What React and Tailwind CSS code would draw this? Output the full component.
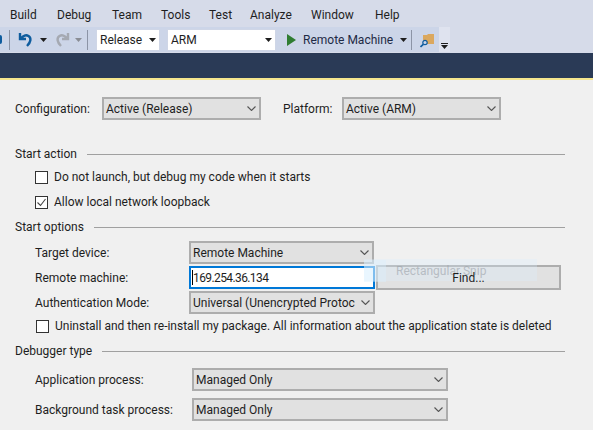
const menus = [
  ["Build", 10],
  ["Debug", 57],
  ["Team", 112],
  ["Tools", 161],
  ["Test", 209],
  ["Analyze", 250],
  ["Window", 311],
  ["Help", 375],
];

const Chevron = () => (
  <svg width="9" height="5" viewBox="0 0 9 5" className="shrink-0">
    <path d="M0.5 0.5l4 4 4-4" fill="none" stroke="#555" strokeWidth="1.1" />
  </svg>
);

const Caret = ({ color = "#1e1e1e" }) => (
  <svg width="7" height="4" viewBox="0 0 7 4" className="shrink-0">
    <path d="M0 0h7L3.5 4z" fill={color} />
  </svg>
);

const Select = ({ value, className }) => (
  <div
    className={`flex h-[23px] items-center justify-between gap-[4px] border-2 border-[#adadad] bg-[#e1e1e1] pl-[2px] pr-[3px] text-[#1e1e1e] ${className}`}
  >
    <span className="whitespace-nowrap">{value}</span>
    <Chevron />
  </div>
);

const Check = ({ checked }) => (
  <div className="flex h-[13px] w-[13px] shrink-0 items-center justify-center border border-[#333] bg-white">
    {checked && (
      <svg width="11" height="11" viewBox="0 0 11 11">
        <path d="M1.5 5.5l3 3 5-6.5" fill="none" stroke="#444" strokeWidth="1.1" />
      </svg>
    )}
  </div>
);

const Section = ({ title, className }) => (
  <div className={`flex h-[16px] items-center gap-[10px] pl-[15px] pr-[28px] ${className}`}>
    <span className="whitespace-nowrap">{title}</span>
    <div className="h-px flex-1 bg-[#a0a0a0]" />
  </div>
);

const Field = ({ label, children, className }) => (
  <div className={`flex items-center ${className}`}>
    <span className="w-[189px] shrink-0 whitespace-nowrap pl-[35px]">{label}</span>
    {children}
  </div>
);

export default function App() {
  return (
    <div
      className="relative h-[430px] w-[593px] overflow-hidden bg-[#f0f0f0] text-[12px] leading-[16px] text-[#1e1e1e]"
      style={{ fontFamily: 'Roboto, "Noto Sans", sans-serif' }}
    >
      {/* menu bar */}
      <div className="flex h-[27px] items-center bg-[#d6dbe9] pt-[2px] text-[#1e1e1e]">
        {menus.map(([name, x], i) => (
          <span
            key={name}
            className="whitespace-nowrap"
            style={{ marginLeft: i === 0 ? x : 0, width: i < menus.length - 1 ? menus[i + 1][1] - x : "auto" }}
          >
            {name}
          </span>
        ))}
      </div>

      {/* toolbar */}
      <div className="flex h-[26px] bg-[#d6dbe9]">
        <div className="flex h-[25px] w-[439px] items-center bg-[#ccd5e8]">
          <div className="h-[9px] w-[2px] rounded-r-sm bg-[#0e5c9e]" />
          <div className="ml-[7px] h-[20px] w-px bg-[#8c94a6]" />
          <svg width="16" height="16" viewBox="0 0 16 16" className="ml-[8px]">
            <path d="M2 1v6h6M3 6.5C5 3.5 8 2.5 10.5 4c3 2 2.5 6-1.5 10" fill="none" stroke="#0e5c9e" strokeWidth="2.4" />
          </svg>
          <div className="ml-[6px]"><Caret /></div>
          <svg width="16" height="16" viewBox="0 0 16 16" className="ml-[7px]">
            <path d="M14 1v6H8M13 6.5C11 3.5 8 2.5 5.5 4c-3 2-2.5 6 1.5 10" fill="none" stroke="#a5a9b2" strokeWidth="2.4" />
          </svg>
          <div className="ml-[5px]"><Caret color="#8a8d95" /></div>
          <div className="ml-[5px] h-[20px] w-px bg-[#8c94a6]" />
          <div className="ml-[8px] flex h-[22px] w-[64px] items-center justify-between border border-[#cfd6e6] bg-white pl-[3px] pr-[3px]">
            <span>Release</span>
            <Caret />
          </div>
          <div className="ml-[7px] flex h-[22px] w-[109px] items-center justify-between border border-[#cfd6e6] bg-white pl-[3px] pr-[3px]">
            <span>ARM</span>
            <Caret />
          </div>
          <svg width="9" height="12" viewBox="0 0 9 12" className="ml-[11px]">
            <path d="M0 0l9 6-9 6z" fill="#2f7d32" />
          </svg>
          <span className="ml-[7px] w-[90px] whitespace-nowrap text-[#1e2a45]">Remote Machine</span>
          <div className="ml-[7px]"><Caret /></div>
          <div className="ml-[4px] h-[20px] w-px bg-[#8c94a6]" />
          <svg width="16" height="16" viewBox="0 0 16 16" className="ml-[8px]">
            <path d="M3 3h4l1-1h6v10H3z" fill="#dba85f" />
            <circle cx="5" cy="10.5" r="2.2" fill="#ccd5e8" stroke="#0e5c9e" strokeWidth="1.2" />
            <path d="M3.3 12.3L0.5 15" stroke="#0e5c9e" strokeWidth="1.6" />
          </svg>
        </div>
        <div className="flex h-[25px] w-[11px] flex-col items-center justify-end bg-[#dfe3ef] pb-[3px]">
          <div className="mb-[1px] h-px w-[7px] bg-[#1e1e1e]" />
          <Caret />
        </div>
      </div>

      {/* title strip */}
      <div className="h-[25px] bg-[#2a3a56]" />
      <div className="h-[2px] bg-[#f5e68f]" />

      {/* configuration row */}
      <div className="mt-[17px] flex items-center">
        <span className="w-[102px] shrink-0 pl-[15px]">Configuration:</span>
        <Select value="Active (Release)" className="w-[159px]" />
        <span className="ml-[22px] w-[59px] shrink-0">Platform:</span>
        <Select value="Active (ARM)" className="w-[159px]" />
      </div>

      <Section title="Start action" className="mt-[26px]" />
      <div className="mt-[7px] flex h-[16px] items-center gap-[6px] pl-[35px]">
        <Check />
        <span className="whitespace-nowrap">Do not launch, but debug my code when it starts</span>
      </div>
      <div className="mt-[9px] flex h-[16px] items-center gap-[6px] pl-[35px]">
        <Check checked />
        <span className="whitespace-nowrap">Allow local network loopback</span>
      </div>

      <Section title="Start options" className="mt-[9px]" />
      <Field label="Target device:" className="mt-[6px]">
        <Select value="Remote Machine" className="w-[185px]" />
      </Field>
      <Field label="Remote machine:" className="mt-px">
        <div className="flex h-[23px] w-[186px] items-center border-2 border-[#0078d7] bg-white pl-[1px]">
          <div className="h-[15px] w-px bg-black" />
          <span className="tracking-[-0.6px]">169.254.36.134</span>
        </div>
        <div className="ml-px flex h-[25px] w-[185px] items-center justify-center border-2 border-[#adadad] bg-[#e1e1e1] pt-px">
          <span className="relative z-10">Find...</span>
        </div>
      </Field>
      <Field label="Authentication Mode:" className="mt-px">
        <Select value="Universal (Unencrypted Protoc" className="w-[186px]" />
      </Field>
      <div className="mt-[4px] flex h-[16px] items-center gap-[6px] pl-[36px]">
        <Check />
        <span className="whitespace-nowrap">
          Uninstall and then re-install my package. All information about the application state is deleted
        </span>
      </div>

      <Section title="Debugger type" className="mt-[9px]" />
      <div className="mt-[9px] flex items-center">
        <span className="w-[192px] shrink-0 pl-[35px]">Application process:</span>
        <Select value="Managed Only" className="w-[256px]" />
      </div>
      <div className="mt-[7px] flex items-center">
        <span className="w-[192px] shrink-0 pl-[35px]">Background task process:</span>
        <Select value="Managed Only" className="w-[256px]" />
      </div>

      {/* faded snipping tool tooltip laid over the form */}
      <div className="absolute left-[364px] top-[259px] flex h-[22px] w-[173px] items-center bg-[#d9f0ff]/30 pt-px text-[#9aa0a8]/60">
        <div className="mr-[10px] h-[22px] w-[22px] bg-[#d9f0ff]/40" />
        Rectangular Snip
      </div>
    </div>
  );
}
